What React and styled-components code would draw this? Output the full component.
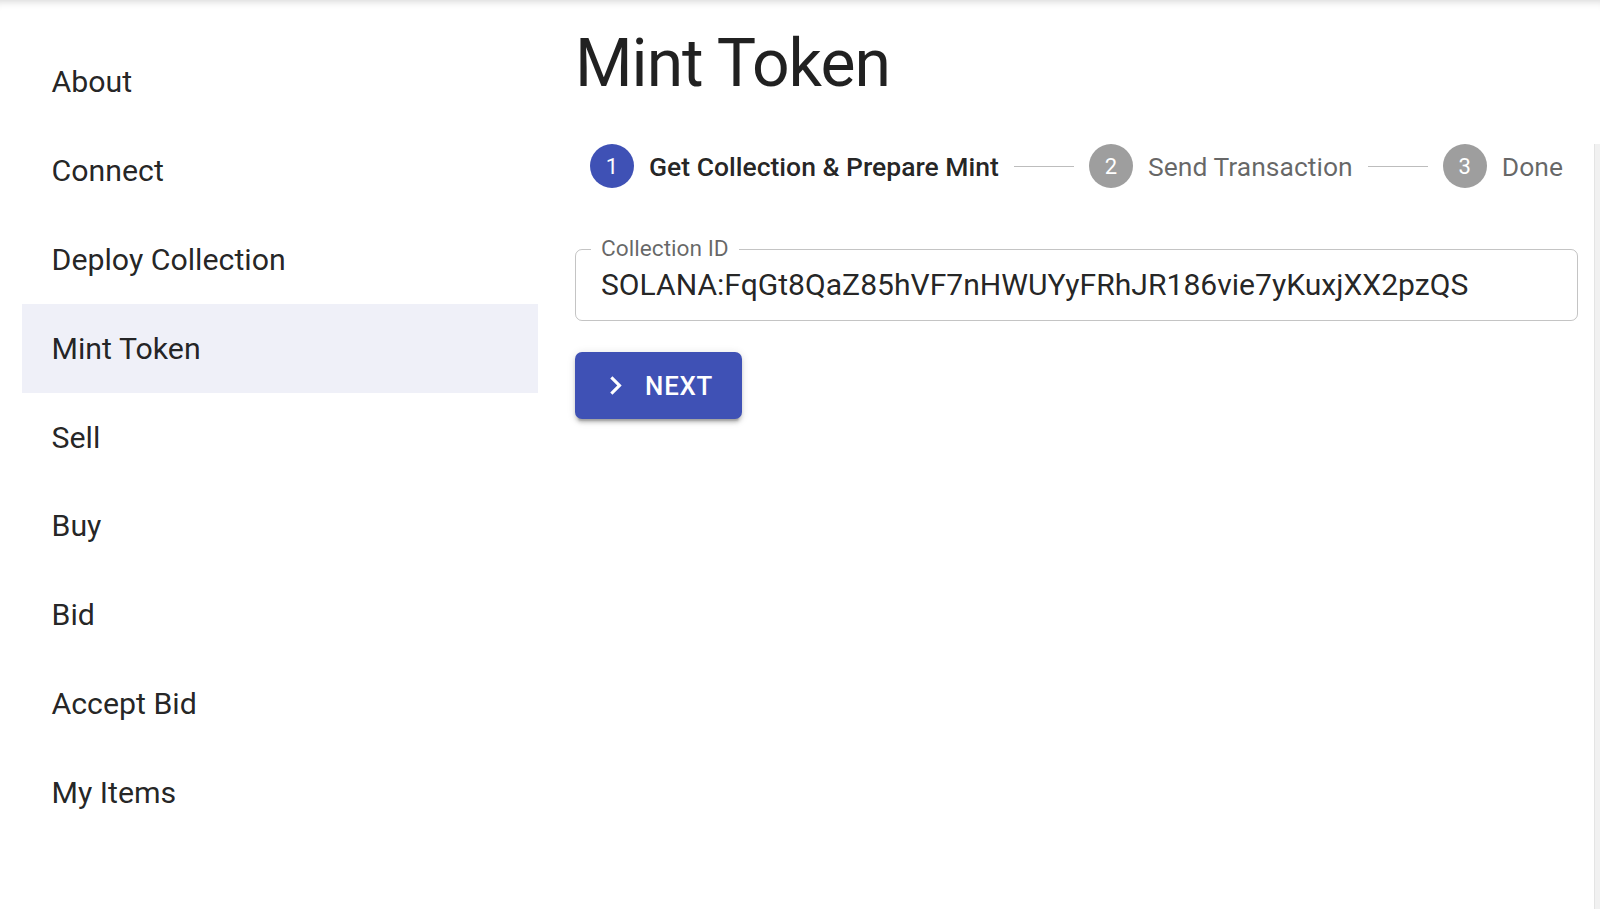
import React from 'react';
import styled, { createGlobalStyle } from 'styled-components';

const GlobalStyle = createGlobalStyle`
  html, body {
    margin: 0;
    padding: 0;
    background: #fff;
  }
  body {
    font-family: Roboto, "Liberation Sans", Arial, sans-serif;
    color: rgba(0, 0, 0, 0.87);
  }
`;

const navItems = ['About', 'Connect', 'Deploy Collection', 'Mint Token', 'Sell', 'Buy', 'Bid', 'Accept Bid', 'My Items'];

const steps = ['Get Collection & Prepare Mint', 'Send Transaction', 'Done'];

const ChevronIcon = () => (
  <svg width='37' height='37' viewBox='0 0 24 24' fill='currentColor'>
    <path d='M10 6 8.59 7.41 13.17 12l-4.58 4.59L10 18l6-6z' />
  </svg>
);

export default function App() {
  const active = 0;
  return (
    <Page>
      <GlobalStyle />
      <Sidebar>
        {navItems.map((item) => (
          <NavItem key={item} selected={item === 'Mint Token'}>
            {item}
          </NavItem>
        ))}
      </Sidebar>
      <Main>
        <Title>Mint Token</Title>
        <Stepper>
          {steps.map((label, i) => (
            <React.Fragment key={label}>
              {i > 0 && <Connector />}
              <Step>
                <StepCircle active={i === active}>{i + 1}</StepCircle>
                <StepLabel active={i === active}>{label}</StepLabel>
              </Step>
            </React.Fragment>
          ))}
        </Stepper>
        <Field>
          <FieldLabel>Collection ID</FieldLabel>
          <FieldValue>SOLANA:FqGt8QaZ85hVF7nHWUYyFRhJR186vie7yKuxjXX2pzQS</FieldValue>
        </Field>
        <Button>
          <span className='icon'>
            <ChevronIcon />
          </span>
          Next
        </Button>
      </Main>
      <ScrollStrip />
    </Page>
  );
}

const Page = styled.div`
  display: grid;
  grid-template-columns: 538px 1fr 6px;
  min-height: 909px;
  box-shadow: inset 0 9px 8px -8px rgba(0, 0, 0, 0.18);
`;

const Sidebar = styled.nav`
  display: flex;
  flex-direction: column;
  padding: 38px 0 0 22px;
`;

const NavItem = styled.div`
  display: flex;
  align-items: center;
  height: 88.8px;
  padding-left: 29.5px;
  font-size: 30.3px;
  line-height: 44px;
  color: rgba(0, 0, 0, 0.87);
  background: ${(p) => (p.selected ? '#eff0f8' : 'transparent')};
`;

const Main = styled.main`
  display: flex;
  flex-direction: column;
  align-items: flex-start;
  margin-left: 37px;
  margin-right: 16px;
`;

const Title = styled.h1`
  margin: 24px 0 0;
  font-size: 66px;
  font-weight: 400;
  line-height: 80px;
  letter-spacing: -1px;
  color: rgba(0, 0, 0, 0.87);
`;

const Stepper = styled.div`
  align-self: stretch;
  display: flex;
  align-items: center;
  margin-top: 40px;
  height: 44px;
`;

const Step = styled.div`
  display: flex;
  align-items: center;
  padding: 0 15px;
`;

const StepCircle = styled.div`
  width: 44px;
  height: 44px;
  border-radius: 50%;
  display: flex;
  align-items: center;
  justify-content: center;
  background: ${(p) => (p.active ? '#3f51b5' : '#9e9e9e')};
  color: #fff;
  font-size: 22px;
`;

const StepLabel = styled.span`
  margin-left: 15px;
  font-size: 26.5px;
  font-weight: ${(p) => (p.active ? 500 : 400)};
  color: ${(p) => (p.active ? 'rgba(0, 0, 0, 0.87)' : 'rgba(0, 0, 0, 0.6)')};
  white-space: nowrap;
`;

const Connector = styled.div`
  flex: 1;
  border-top: 1.5px solid #bdbdbd;
`;

const Field = styled.div`
  position: relative;
  align-self: stretch;
  box-sizing: border-box;
  height: 72px;
  margin-top: 61px;
  padding: 0 25px;
  display: flex;
  align-items: center;
  border: 1.5px solid rgba(0, 0, 0, 0.23);
  border-radius: 7px;
`;

const FieldLabel = styled.label`
  position: absolute;
  top: -13px;
  left: 15px;
  padding: 0 10px;
  background: #fff;
  font-size: 22.7px;
  line-height: 24px;
  color: rgba(0, 0, 0, 0.6);
`;

const FieldValue = styled.div`
  font-size: 30.1px;
  line-height: 36px;
  color: rgba(0, 0, 0, 0.87);
  white-space: nowrap;
`;

const Button = styled.button`
  display: inline-flex;
  align-items: center;
  height: 67px;
  margin-top: 31px;
  padding: 0 29.5px;
  border: none;
  border-radius: 7px;
  background: #3f51b5;
  color: #fff;
  font-family: Roboto, "Liberation Sans", Arial, sans-serif;
  font-size: 25.8px;
  font-weight: 500;
  letter-spacing: 0.74px;
  text-transform: uppercase;
  box-shadow: 0 5.5px 1.8px -3.7px rgba(0, 0, 0, 0.2), 0 3.7px 3.7px 0 rgba(0, 0, 0, 0.14),
    0 1.8px 9px 0 rgba(0, 0, 0, 0.12);
  .icon {
    display: inline-flex;
    margin-left: -7.4px;
    margin-right: 11px;
  }
`;

const ScrollStrip = styled.div`
  margin-top: 144px;
  background: #f1f1f1;
  border-left: 1px solid #e4e4e4;
`;
